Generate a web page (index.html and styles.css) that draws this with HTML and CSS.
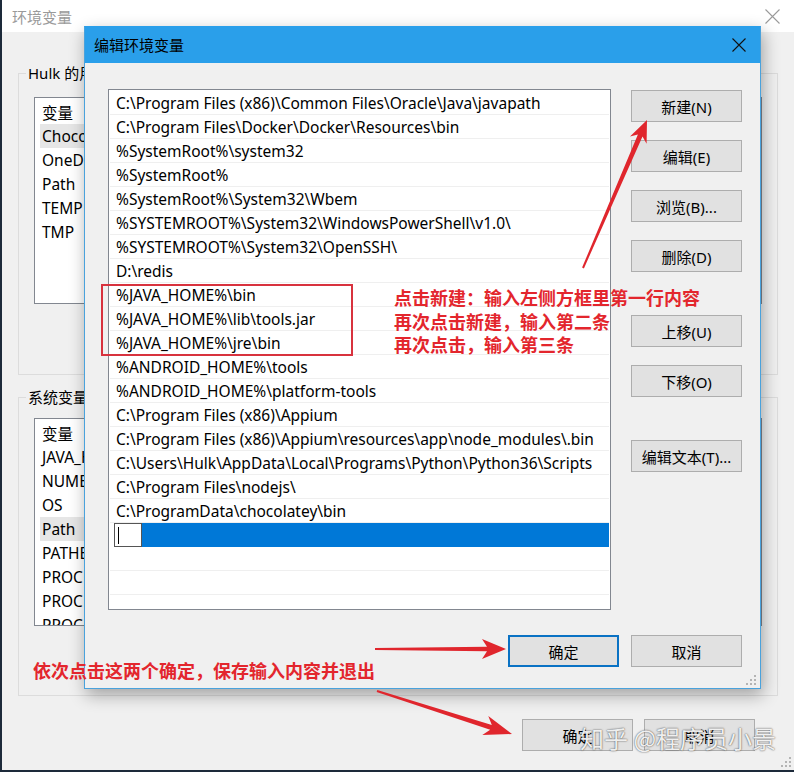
FILE: index.html
```html
<!DOCTYPE html>
<html lang="zh-CN">
<head>
<meta charset="utf-8">
<title>编辑环境变量</title>
<link rel="stylesheet" href="styles.css">
</head>
<body>
<div class="window">
  <div class="win-title">
    <span>环境变量</span>
    <svg class="win-close" width="15" height="15" viewBox="0 0 15 15"><path d="M0.5 0.5 L14.5 14.5 M14.5 0.5 L0.5 14.5" stroke="#9a9a9a" stroke-width="1.1" fill="none"/></svg>
  </div>
  <div class="win-body">
    <fieldset class="group g1">
      <legend>Hulk 的用户变量(U)</legend>
      <div class="varlist">
        <div class="vrow head">变量</div>
        <div class="vrow sel">ChocolateyLastPathUpdate</div>
        <div class="vrow">OneDrive</div>
        <div class="vrow">Path</div>
        <div class="vrow">TEMP</div>
        <div class="vrow">TMP</div>
      </div>
    </fieldset>
    <fieldset class="group g2">
      <legend>系统变量(S)</legend>
      <div class="varlist">
        <div class="vrow head">变量</div>
        <div class="vrow">JAVA_HOME</div>
        <div class="vrow">NUMBER_OF_PROCESSORS</div>
        <div class="vrow">OS</div>
        <div class="vrow sel">Path</div>
        <div class="vrow">PATHEXT</div>
        <div class="vrow">PROCESSOR_ARCHITECTURE</div>
        <div class="vrow">PROCESSOR_IDENTIFIER</div>
        <div class="vrow">PROCESSOR_LEVEL</div>
      </div>
    </fieldset>
    <div class="win-foot">
      <button class="btn">确定</button>
      <button class="btn">取消</button>
    </div>
  </div>
  <svg class="grip win-grip" width="12" height="12" viewBox="0 0 12 12"><g fill="#b4b4b4"><rect x="9" y="1" width="2" height="2"/><rect x="9" y="5" width="2" height="2"/><rect x="5" y="5" width="2" height="2"/><rect x="9" y="9" width="2" height="2"/><rect x="5" y="9" width="2" height="2"/><rect x="1" y="9" width="2" height="2"/></g></svg>
</div>

<div class="dlg">
  <div class="dlg-title">
    <span>编辑环境变量</span>
    <svg width="14" height="14" viewBox="0 0 14 14"><path d="M0.5 0.5 L13.5 13.5 M13.5 0.5 L0.5 13.5" stroke="#111" stroke-width="1.1" fill="none"/></svg>
  </div>
  <div class="dlg-body">
    <div class="dlg-main">
      <div class="pathlist">
        <div class="prow">C:\Program Files (x86)\Common Files\Oracle\Java\javapath</div>
        <div class="prow">C:\Program Files\Docker\Docker\Resources\bin</div>
        <div class="prow">%SystemRoot%\system32</div>
        <div class="prow">%SystemRoot%</div>
        <div class="prow">%SystemRoot%\System32\Wbem</div>
        <div class="prow">%SYSTEMROOT%\System32\WindowsPowerShell\v1.0\</div>
        <div class="prow">%SYSTEMROOT%\System32\OpenSSH\</div>
        <div class="prow">D:\redis</div>
        <div class="prow">%JAVA_HOME%\bin</div>
        <div class="prow">%JAVA_HOME%\lib\tools.jar</div>
        <div class="prow">%JAVA_HOME%\jre\bin</div>
        <div class="prow">%ANDROID_HOME%\tools</div>
        <div class="prow">%ANDROID_HOME%\platform-tools</div>
        <div class="prow">C:\Program Files (x86)\Appium</div>
        <div class="prow">C:\Program Files (x86)\Appium\resources\app\node_modules\.bin</div>
        <div class="prow">C:\Users\Hulk\AppData\Local\Programs\Python\Python36\Scripts</div>
        <div class="prow">C:\Program Files\nodejs\</div>
        <div class="prow">C:\ProgramData\chocolatey\bin</div>
        <div class="prow editing"><span class="editbox"><span class="caret"></span></span><span class="selfill"></span></div>
        <div class="prow"></div>
        <div class="prow"></div>
      </div>
      <div class="btncol">
        <button class="btn">新建(N)</button>
        <button class="btn">编辑(E)</button>
        <button class="btn">浏览(B)...</button>
        <button class="btn">删除(D)</button>
        <button class="btn sep">上移(U)</button>
        <button class="btn">下移(O)</button>
        <button class="btn sep">编辑文本(T)...</button>
      </div>
    </div>
    <div class="dlg-foot">
      <button class="btn default">确定</button>
      <button class="btn">取消</button>
    </div>
  </div>
  <svg class="grip dlg-grip" width="12" height="12" viewBox="0 0 12 12"><g fill="#b4b4b4"><rect x="9" y="1" width="2" height="2"/><rect x="9" y="5" width="2" height="2"/><rect x="5" y="5" width="2" height="2"/><rect x="9" y="9" width="2" height="2"/><rect x="5" y="9" width="2" height="2"/><rect x="1" y="9" width="2" height="2"/></g></svg>
</div>

<div class="note-box"></div>
<div class="note note-steps">
  <div>点击新建：输入左侧方框里第一行内容</div>
  <div>再次点击新建，输入第二条</div>
  <div>再次点击，输入第三条</div>
</div>
<div class="note note-save">依次点击这两个确定，保存输入内容并退出</div>

<svg class="arrows" width="794" height="772" viewBox="0 0 794 772">
  <g fill="#e0262d">
    <polygon points="583.9,268.4 642.5,136.6 646.6,143.8 647,120 630,136.6 637.9,134.6 582.1,267.6"/>
    <polygon points="375,648 487,646.8 482,639 506,649 482,659 487,651.2 375,650"/>
    <polygon points="377.3,690 491.8,724.9 488.3,716 512,734 482.3,735 490.2,729.7 376.7,692"/>
  </g>
</svg>

<div class="watermark">知乎 @程序员小景</div>
</body>
</html>
```

FILE: styles.css
```css
* {
  box-sizing: border-box;
}

body {
  margin: 0;
  width: 794px;
  height: 772px;
  overflow: hidden;
  position: relative;
  background: #f0f0f0;
  color: #000;
  font-family: "Noto Sans", "Noto Sans CJK SC", sans-serif;
  font-size: 15px;
}

/* ---------- background window ---------- */
.window {
  position: relative;
  height: 772px;
  display: flex;
  flex-direction: column;
  background: #f0f0f0;
  border-left: 2px solid #1d2a3a;
  border-bottom: 2px solid #1d2a3a;
}

.win-title {
  flex: none;
  height: 32px;
  background: #fff;
  color: #9a9a9a;
  display: flex;
  align-items: center;
  justify-content: space-between;
  padding: 0 14px 0 10px;
}

.win-body {
  flex: 1;
  display: flex;
  flex-direction: column;
  padding: 31px 16px 0 16px;
}

.group {
  margin: 0;
  min-width: 0;
  border: 1px solid #dcdcdc;
  padding: 0 15px;
}

.group legend {
  height: 20px;
  line-height: 20px;
  padding: 0 2px;
  margin-left: -8px;
}

.g1 {
  padding-bottom: 70px;
  margin-bottom: 12px;
}

.g1 .varlist {
  margin-top: 14px;
  height: 207px;
}

.g2 {
  padding-bottom: 69px;
}

.g2 .varlist {
  margin-top: 11px;
  height: 208px;
}

.varlist {
  background: #fff;
  border: 1px solid #828790;
  padding: 0 4px 0 5px;
  overflow: hidden;
  font-size: 15.5px;
}

.vrow {
  display: flex;
  align-items: center;
  height: 24px;
  padding-left: 2px;
  white-space: nowrap;
}

.vrow.head {
  height: 26px;
  padding-top: 2px;
}

.vrow.sel {
  background: #e6e6e6;
}

.win-foot {
  display: flex;
  justify-content: flex-end;
  gap: 11px;
  margin-top: 23px;
  padding-right: 23px;
}

.win-foot .btn {
  width: 111px;
}

.grip {
  position: absolute;
}

.win-grip {
  right: 2px;
  bottom: 2px;
}

/* ---------- buttons ---------- */
.btn {
  height: 32px;
  padding: 0;
  margin: 0;
  background: #e1e1e1;
  border: 1px solid #adadad;
  color: #000;
  font: inherit;
}

.btn.default {
  border: 2px solid #0a72c4;
}

/* ---------- edit dialog ---------- */
.dlg {
  position: absolute;
  left: 84px;
  top: 26px;
  width: 677px;
  height: 663px;
  display: flex;
  flex-direction: column;
  background: #f0f0f0;
  border: 1px solid #4aa2dc;
  border-top-color: #2a9fea;
  box-shadow: 2px 6px 16px rgba(0, 0, 0, 0.33);
}

.dlg-title {
  flex: none;
  height: 36px;
  background: #2a9fea;
  display: flex;
  align-items: center;
  justify-content: space-between;
  padding: 0 14px 1px 9px;
}

.dlg-body {
  flex: 1;
  display: flex;
  flex-direction: column;
  padding: 26px 18px 0 23px;
}

.dlg-main {
  display: flex;
  gap: 20px;
}

.pathlist {
  flex: none;
  width: 503px;
  height: 521px;
  background: #fff;
  border: 1px solid #828790;
  padding: 1px 1px 0 1px;
  overflow: hidden;
  font-size: 15.5px;
}

.prow {
  height: 24px;
  line-height: 24px;
  padding-left: 6px;
  border-bottom: 1px solid #efefef;
  white-space: nowrap;
}

.prow.editing {
  display: flex;
  padding-left: 4px;
  border-bottom: none;
}

.editbox {
  flex: none;
  width: 28px;
  height: 24px;
  background: #fff;
  border: 1px solid #555;
  padding: 3px 0 0 3px;
}

.caret {
  display: block;
  width: 1px;
  height: 17px;
  background: #000;
}

.selfill {
  flex: 1;
  background: #0078d7;
}

.btncol {
  flex: none;
  width: 111px;
  display: flex;
  flex-direction: column;
  gap: 18px;
  padding-top: 1px;
}

.btncol .sep {
  margin-top: 25px;
}

.dlg-foot {
  display: flex;
  justify-content: flex-end;
  gap: 12px;
  margin-top: 25px;
}

.dlg-foot .btn {
  width: 111px;
}

.dlg-grip {
  right: 3px;
  bottom: 2px;
}

/* ---------- annotations ---------- */
.note-box {
  position: absolute;
  left: 101px;
  top: 284px;
  width: 252px;
  height: 72px;
  border: 2px solid #d8323e;
}

.note {
  position: absolute;
  color: #e3262d;
  font-family: "Noto Sans CJK SC", sans-serif;
  font-weight: 700;
  font-size: 18px;
  line-height: 23.5px;
  white-space: nowrap;
}

.note-steps {
  left: 394px;
  top: 286px;
}

.note-save {
  left: 33px;
  top: 659px;
}

.arrows {
  position: absolute;
  left: 0;
  top: 0;
  pointer-events: none;
}

.watermark {
  position: absolute;
  left: 580px;
  top: 722px;
  font-family: "Noto Sans CJK SC", sans-serif;
  font-size: 24px;
  line-height: 32px;
  color: rgba(255, 255, 255, 0.92);
  text-shadow: 0 0 2px rgba(0, 0, 0, 0.55), 0 0 1px rgba(0, 0, 0, 0.4);
  white-space: nowrap;
}
```
